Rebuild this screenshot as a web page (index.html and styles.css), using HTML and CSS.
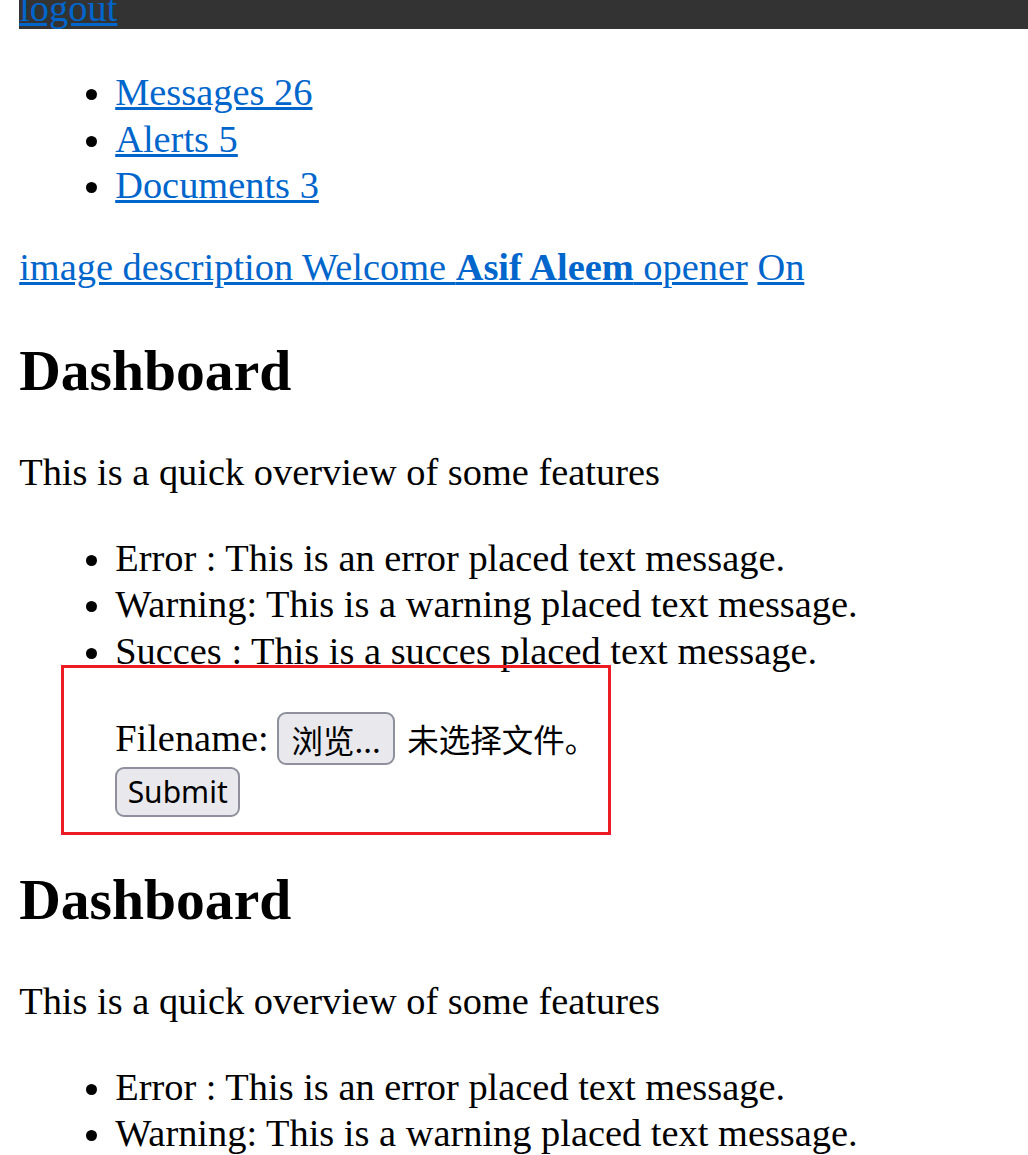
FILE: index.html
```html
<!DOCTYPE html>
<html lang="zh-CN">
<head>
<meta charset="utf-8">
<title>Dashboard</title>
<link rel="stylesheet" href="styles.css">
</head>
<body>
<header class="topbar"><a href="#" class="topbar-link">logout</a></header>
<ul class="nav-list">
  <li><a href="#">Messages 26</a></li>
  <li><a href="#">Alerts 5</a></li>
  <li><a href="#">Documents 3</a></li>
</ul>
<div class="welcome"><a href="#">image description Welcome <b>Asif Aleem</b> opener</a> <a href="#">On</a></div>
<section class="dash">
  <h1 class="dash-title">Dashboard</h1>
  <p class="dash-intro">This is a quick overview of some features</p>
  <ul class="msg-list">
    <li>Error : This is an error placed text message.</li>
    <li>Warning: This is a warning placed text message.</li>
    <li>Succes : This is a succes placed text message.</li>
  </ul>
  <form class="upload">
    <div class="annotation"></div>
    <div class="upload-row">
      <span class="upload-label">Filename:</span>
      <button type="button" class="btn btn-browse">浏览...</button>
      <span class="nofile">未选择文件。</span>
    </div>
    <div class="upload-row">
      <button type="button" class="btn btn-submit">Submit</button>
    </div>
  </form>
</section>
<section class="dash dash-second">
  <h1 class="dash-title">Dashboard</h1>
  <p class="dash-intro">This is a quick overview of some features</p>
  <ul class="msg-list">
    <li>Error : This is an error placed text message.</li>
    <li>Warning: This is a warning placed text message.</li>
    <li>Succes : This is a succes placed text message.</li>
  </ul>
</section>
</body>
</html>
```
FILE: styles.css
```css
html {
  background: #fff;
}

body {
  margin: 0 0 0 19.2px;
  font-family: "Liberation Serif", "Times New Roman", serif;
  font-size: 38.4px;
  line-height: 46.5px;
  color: #000;
  background: #fff;
}

a {
  color: #0066cc;
  text-decoration: underline;
}

.topbar {
  height: 29px;
  background: #333333;
  display: flex;
  align-items: flex-end;
  overflow: hidden;
  line-height: 42px;
}

.nav-list {
  margin: 40px 0 0;
  padding-left: 96px;
}

.welcome {
  margin-top: 35px;
}

.dash-title {
  font-size: 57.6px;
  line-height: 66px;
  font-weight: bold;
  margin: 48px 0 0;
}

.dash-second .dash-title {
  margin-top: 50px;
}

.dash-intro {
  margin: 45px 0 0;
}

.msg-list {
  margin: 39px 0 0;
  padding-left: 96px;
}

.upload {
  position: relative;
  margin-top: 38px;
  padding-left: 96px;
  display: flex;
  flex-direction: column;
  gap: 1.7px;
}

.upload-row {
  display: flex;
  align-items: center;
}

.btn {
  box-sizing: border-box;
  margin: 0;
  display: inline-flex;
  align-items: center;
  justify-content: center;
  background: #e9e9ed;
  border: 2px solid #8f8f9d;
  border-radius: 9px;
  color: #000;
  padding: 0;
}

.btn-browse {
  width: 118px;
  height: 53px;
  margin-left: 8.5px;
  font-family: "Noto Sans CJK SC", "Noto Sans", sans-serif;
  font-size: 31.5px;
}

.nofile {
  margin-left: 12px;
  font-family: "Noto Sans CJK SC", "Noto Sans", sans-serif;
  font-size: 31.5px;
}

.btn-submit {
  width: 125px;
  height: 50.6px;
  font-family: "Noto Sans", "Liberation Sans", sans-serif;
  font-size: 30px;
}

.annotation {
  position: absolute;
  left: 41.8px;
  top: -47px;
  width: 550px;
  height: 170px;
  box-sizing: border-box;
  border: 3.5px solid #ed1c24;
  pointer-events: none;
}
```
